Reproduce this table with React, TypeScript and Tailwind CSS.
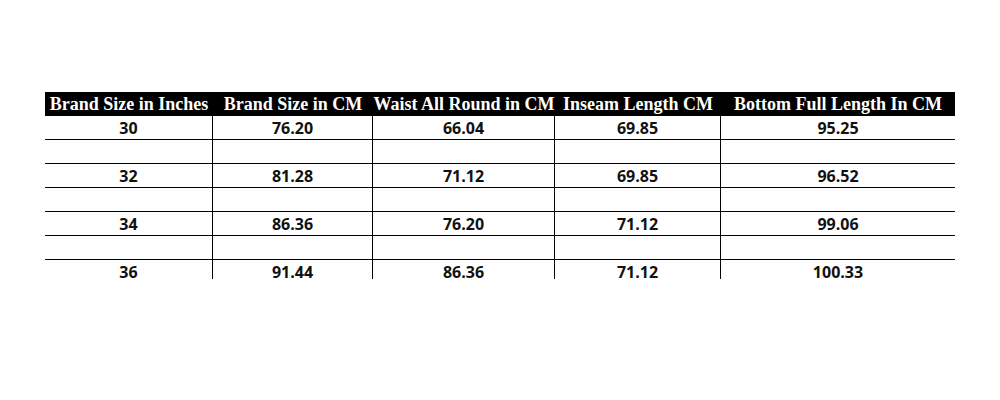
const headers = [
  "Brand Size in Inches",
  "Brand Size in CM",
  "Waist All Round in CM",
  "Inseam Length CM",
  "Bottom Full Length In CM",
];

const rows: string[][] = [
  ["30", "76.20", "66.04", "69.85", "95.25"],
  ["", "", "", "", ""],
  ["32", "81.28", "71.12", "69.85", "96.52"],
  ["", "", "", "", ""],
  ["34", "86.36", "76.20", "71.12", "99.06"],
  ["", "", "", "", ""],
  ["36", "91.44", "86.36", "71.12", "100.33"],
];

export default function App() {
  return (
    <div className="w-[1000px] h-[400px] bg-white pt-[92px] pl-[45px]">
      <div className="grid grid-cols-[168px_160px_182px_166px_234px] w-[910px]">
        {headers.map((h) => (
          <div
            key={h}
            className="h-6 bg-black text-white font-bold text-[18px] leading-6 text-center whitespace-nowrap font-['Liberation_Serif',serif]"
          >
            {h}
          </div>
        ))}
        {rows.map((row, r) => {
          const last = r === rows.length - 1;
          return row.map((cell, c) => (
            <div
              key={`${r}-${c}`}
              className={
                (last ? "h-[19px] " : "h-6 border-b border-black ") +
                (c < 4 ? "border-r border-black " : "") +
                "text-center font-bold text-[16px] leading-6 text-[#111] font-['Open_Sans',sans-serif]"
              }
            >
              {cell}
            </div>
          ));
        })}
      </div>
    </div>
  );
}
